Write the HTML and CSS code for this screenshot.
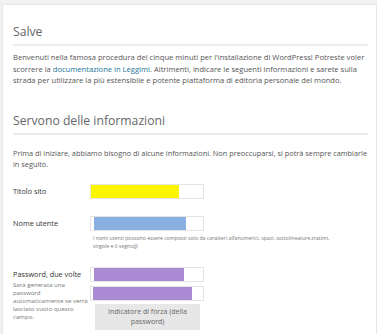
FILE: index.html
```html
<!DOCTYPE html>
<html lang="it">
<head>
  <meta charset="UTF-8" />
  <meta name="viewport" content="width=device-width, initial-scale=1.0" />
  <title>Installazione di WordPress</title>
  <link rel="stylesheet" href="styles.css">
</head>
<body>
  <div class="card">
    <h1>Salve</h1>
    <p class="intro">Benvenuti nella famosa procedura del cinque minuti per l'installazione di WordPress! Potreste voler scorrere la <a href="#">documentazione in Leggimi</a>. Altrimenti, indicare le seguenti informazioni e sarete sulla strada per utilizzare la più estensibile e potente piattaforma di editoria personale del mondo.</p>

    <h2>Servono delle informazioni</h2>
    <p class="intro second">Prima di iniziare, abbiamo bisogno di alcune informazioni. Non preoccuparsi, si potrà sempre cambiarle in seguito.</p>

    <form class="setup">
      <div class="row row-title">
        <label>Titolo sito</label>
        <div class="fields">
          <div class="field"><span class="fill fill-yellow"></span></div>
        </div>
      </div>

      <div class="row row-user">
        <label>Nome utente</label>
        <div class="fields">
          <div class="field"><span class="fill fill-blue"></span></div>
          <p class="hint">I nomi utenti possono essere composti solo da caratteri alfanumerici, spazi, sottolineature,trattini, virgole e il segno@</p>
        </div>
      </div>

      <div class="row row-pass">
        <div>
          <label>Password, due volte</label>
          <p class="hint side">Sarà generata una<br>password<br>automaticamente se verrà<br>lasciato vuoto questo<br>campo.</p>
        </div>
        <div class="fields">
          <div class="field"><span class="fill fill-purple"></span></div>
          <div class="field field-second"><span class="fill fill-purple wide"></span></div>
          <div class="strength">Indicatore di forza (della<br>password)</div>
        </div>
      </div>
    </form>
  </div>
</body>
</html>
```

FILE: styles.css
```css
body {
  margin: 0;
  background: #f1f1f1;
  font-family: 'Open Sans', 'DejaVu Sans', sans-serif;
  color: #444;
  overflow: hidden;
}
.card {
  margin: 5px 1px 0 3px;
  padding: 19px 8px 20px 10px;
  background: #fff;
  box-shadow: 0 0 2px rgba(0, 0, 0, 0.12);
}
h1, h2 {
  margin: 0;
  padding-bottom: 5px;
  font-size: 12.2px;
  line-height: 15px;
  font-weight: 400;
  color: #666;
  border-bottom: 2px solid #ececec;
}
h2 {
  margin-top: 26px;
}
.intro {
  margin: 6px 0 0;
  font-size: 7.6px;
  line-height: 11.5px;
  color: #555;
}
.intro a {
  color: #21759b;
  text-decoration: none;
}
.intro.second {
  margin-top: 13px;
  font-size: 7.35px;
}
.setup {
  margin-top: 13px;
}
.row {
  display: grid;
  grid-template-columns: 77px 1fr;
}
.row-user {
  margin-top: 17px;
}
.row-pass {
  margin-top: 16px;
}
.row label {
  display: block;
  font-size: 7.3px;
  line-height: 14px;
  color: #333;
}
.field {
  width: 114px;
  height: 15px;
  box-sizing: border-box;
  border: 1px solid #e4e4e4;
  background: #fff;
}
.field-second {
  margin-top: 4px;
}
.fill {
  display: block;
  height: 100%;
}
.fill-yellow {
  width: 88px;
  background: #fbf500;
}
.fill-blue {
  width: 92px;
  margin-left: 3px;
  background: #89b0e0;
}
.fill-purple {
  width: 90px;
  margin-left: 3px;
  background: #a98ad3;
}
.fill-purple.wide {
  width: 99px;
  margin-left: 2px;
}
.hint {
  max-width: 252px;
  margin: 3px 0 0 3px;
  font-size: 5.2px;
  line-height: 8.5px;
  color: #777;
}
.hint.side {
  margin: 0;
  font-size: 6.1px;
  line-height: 8.2px;
  white-space: nowrap;
}
.strength {
  width: 105px;
  margin: 3px 0 0 5px;
  padding: 3px 0;
  background: #e7e7e7;
  font-size: 7px;
  line-height: 10px;
  text-align: center;
  color: #666;
}
```
